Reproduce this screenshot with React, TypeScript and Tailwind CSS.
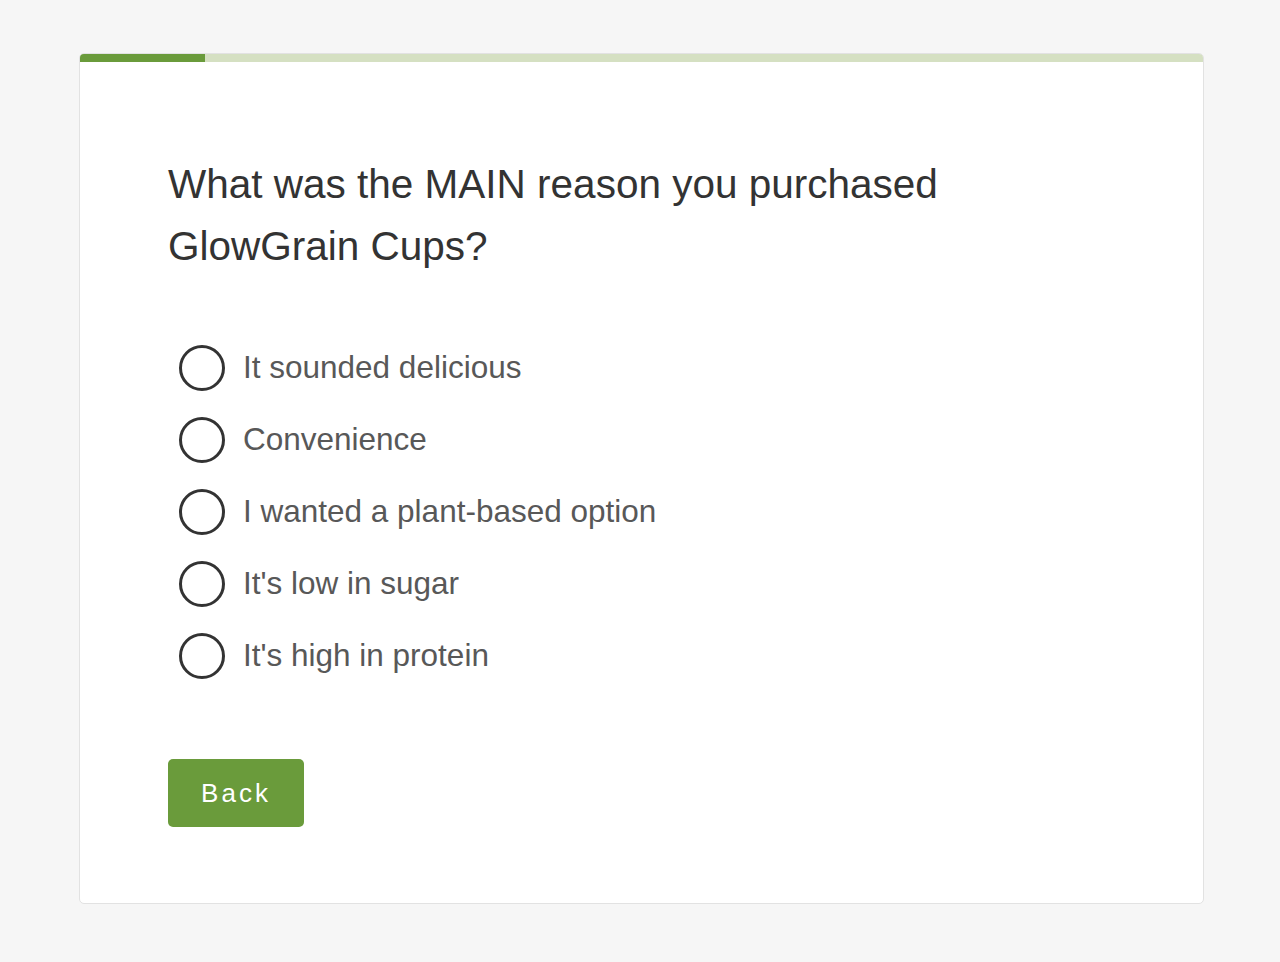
import React from "react";

const options = [
  "It sounded delicious",
  "Convenience",
  "I wanted a plant-based option",
  "It's low in sugar",
  "It's high in protein",
];

export default function App() {
  return (
    <div className="min-h-[962px] w-full bg-[#f6f6f6] pt-[53px] pl-[79px] pr-[76px] pb-[58px]" style={{ fontFamily: '"Liberation Sans", Arial, sans-serif' }}>
      <div className="h-[851px] w-[1125px] rounded-[5px] border border-[#e2e2e2] bg-white overflow-hidden">
        <div className="flex h-[8px] w-full bg-[#d5e0c2]">
          <div className="h-full w-[125px] bg-[#6a9b3b]" />
        </div>
        <div className="pl-[88px] pt-[91px]">
          <h1 className="text-[40.5px] leading-[62px] text-[#333333] font-normal w-[820px]">
            What was the MAIN reason you purchased GlowGrain Cups?
          </h1>
          <div className="mt-[68px] flex flex-col gap-[26px] pl-[11px]">
            {options.map((o) => (
              <label key={o} className="flex items-center gap-[18px] h-[46px]">
                <span className="block h-[46px] w-[46px] rounded-full border-[3px] border-[#333333] bg-white" />
                <span className="text-[31.5px] text-[#585858]">{o}</span>
              </label>
            ))}
          </div>
          <button className="mt-[80px] h-[68px] w-[136px] rounded-[5px] bg-[#6a9b3b] text-white text-[26px] tracking-[3px]">
            Back
          </button>
        </div>
      </div>
    </div>
  );
}
